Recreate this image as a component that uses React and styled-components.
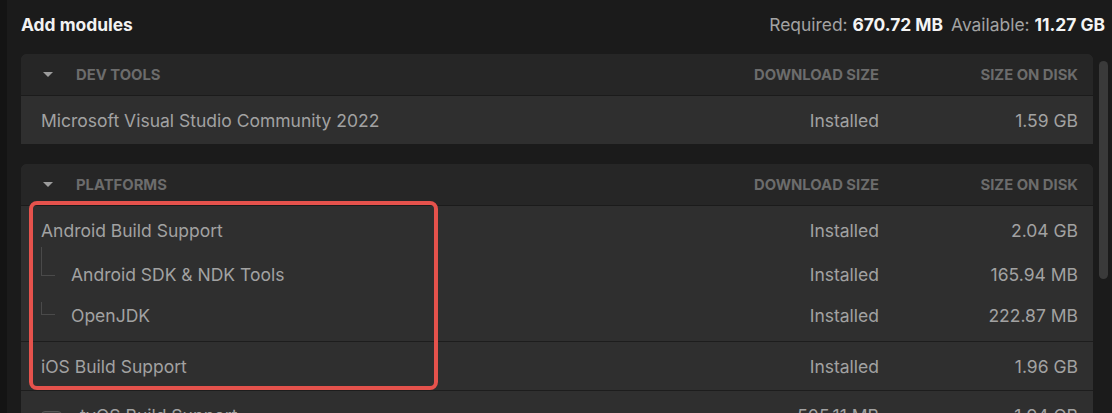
import React from 'react';
import styled, { createGlobalStyle } from 'styled-components';

const GlobalStyle = createGlobalStyle`
  html, body {
    margin: 0;
    padding: 0;
    background: #1b1b1b;
    overflow: hidden;
  }
  body {
    font-family: Inter, "Noto Sans", "Liberation Sans", sans-serif;
    -webkit-font-smoothing: antialiased;
  }
`;

const Page = styled.div`
  height: 413px;
  box-sizing: border-box;
  border-left: 7px solid #141414;
  padding: 0 4px 0 14px;
`;

const Header = styled.div`
  height: 48px;
  margin-bottom: 6px;
  padding-right: 3px;
  display: flex;
  align-items: center;
  justify-content: space-between;
`;

const Title = styled.h1`
  margin: 0;
  font-size: 17.4px;
  font-weight: 700;
  color: #f2f2f2;
`;

const Stats = styled.div`
  font-size: 17.4px;
  color: #a3a3a3;
  display: flex;
  gap: 8px;
  b {
    color: #f4f4f4;
    font-weight: 700;
  }
`;

const Body = styled.div`
  display: grid;
  grid-template-columns: 1072px 9px;
  column-gap: 6px;
  align-items: start;
`;

const List = styled.div`
  display: flex;
  flex-direction: column;
  gap: 20px;
`;

const Scrollbar = styled.div`
  margin-top: 7px;
  height: 218px;
  border-radius: 5px;
  background: #3a3a3a;
`;

const Card = styled.section`
  background: #2f2f2f;
  border-radius: 6px 6px 0 0;
`;

const cols = `
  display: grid;
  grid-template-columns: 1fr 160px 199px;
  padding-right: 15px;
  align-items: center;
`;

const CardHeader = styled.div`
  ${cols}
  height: 41px;
  background: #262626;
  border-radius: 6px 6px 0 0;
  border-bottom: 1px solid #1b1b1b;
  font-size: 14.8px;
  font-weight: 700;
  color: #6c6c6c;
  text-transform: uppercase;
`;

const Section = styled.div`
  display: flex;
  align-items: center;
  gap: 23px;
  padding-left: 22px;
`;

const Caret = styled.span`
  width: 0;
  height: 0;
  border-left: 5px solid transparent;
  border-right: 5px solid transparent;
  border-top: 5px solid #9c9c9c;
`;

const Right = styled.span`
  text-align: right;
`;

const Row = styled.div`
  ${cols}
  height: ${p => (p.child ? 41 : 48)}px;
  font-size: 17.5px;
  color: #a2a2a2;
  border-top: ${p => (p.divided ? '1px solid #1d1d1d' : 'none')};
`;

const Name = styled.div`
  display: flex;
  align-items: center;
  padding-left: 20px;
  gap: ${p => (p.gap || 0)}px;
  height: 100%;
  white-space: nowrap;
`;

const Connector = styled.span`
  align-self: flex-start;
  box-sizing: border-box;
  width: 14px;
  margin-top: ${p => (p.first ? -7 : 7)}px;
  height: ${p => (p.first ? 29 : 13)}px;
  border-left: 1px solid #4a4a4a;
  border-bottom: 1px solid #4a4a4a;
  margin-right: 16px;
`;

const Group = styled.div`
  padding-bottom: ${p => p.pad || 0}px;
`;

const Highlight = styled.div`
  position: relative;
  &::after {
    content: '';
    position: absolute;
    top: -5px;
    left: 8px;
    width: 409px;
    bottom: 0;
    box-sizing: border-box;
    border: 4px solid #e5524c;
    border-radius: 8px;
    pointer-events: none;
  }
`;

const Checkbox = styled.span`
  width: 21px;
  height: 21px;
  box-sizing: border-box;
  border-radius: 4px;
  background: #3f3f3f;
  border: 1px solid #565656;
  margin-top: 12px;
`;

const Sizes = ({ dl, disk }) => (
  <>
    <Right>{dl}</Right>
    <Right>{disk}</Right>
  </>
);

export default function App() {
  return (
    <>
      <GlobalStyle />
      <Page>
        <Header>
          <Title>Add modules</Title>
          <Stats>
            <span>Required: <b>670.72 MB</b></span>
            <span>Available: <b>11.27 GB</b></span>
          </Stats>
        </Header>
        <Body>
          <List>
            <Card>
              <CardHeader>
                <Section><Caret />Dev tools</Section>
                <Right>Download size</Right>
                <Right>Size on disk</Right>
              </CardHeader>
              <Row>
                <Name>Microsoft Visual Studio Community 2022</Name>
                <Sizes dl="Installed" disk="1.59 GB" />
              </Row>
            </Card>
            <Card>
              <CardHeader>
                <Section><Caret />Platforms</Section>
                <Right>Download size</Right>
                <Right>Size on disk</Right>
              </CardHeader>
              <Highlight>
                <Group pad={5}>
                  <Row>
                    <Name>Android Build Support</Name>
                    <Sizes dl="Installed" disk="2.04 GB" />
                  </Row>
                  <Row child>
                    <Name><Connector first />Android SDK &amp; NDK Tools</Name>
                    <Sizes dl="Installed" disk="165.94 MB" />
                  </Row>
                  <Row child>
                    <Name><Connector />OpenJDK</Name>
                    <Sizes dl="Installed" disk="222.87 MB" />
                  </Row>
                </Group>
                <Row divided>
                  <Name>iOS Build Support</Name>
                  <Sizes dl="Installed" disk="1.96 GB" />
                </Row>
              </Highlight>
              <Row divided>
                <Name gap={18}><Checkbox />tvOS Build Support</Name>
                <Sizes dl="505.11 MB" disk="1.94 GB" />
              </Row>
            </Card>
          </List>
          <Scrollbar />
        </Body>
      </Page>
    </>
  );
}
